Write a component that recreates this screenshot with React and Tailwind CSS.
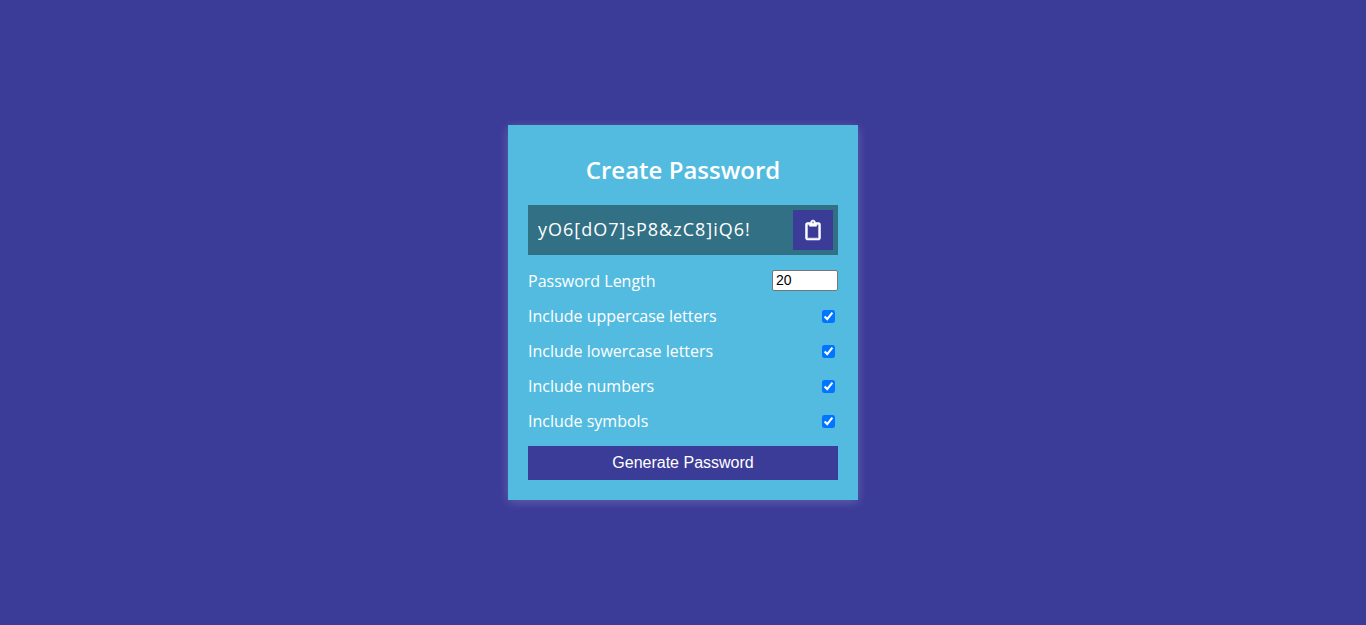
import { useState } from "react";
import { FaRegClipboard } from "react-icons/fa";

const OPTIONS = [
  { id: "uppercase", label: "Include uppercase letters", chars: "ABCDEFGHIJKLMNOPQRSTUVWXYZ" },
  { id: "lowercase", label: "Include lowercase letters", chars: "abcdefghijklmnopqrstuvwxyz" },
  { id: "numbers", label: "Include numbers", chars: "0123456789" },
  { id: "symbols", label: "Include symbols", chars: "!@#$%^&*(){}[]=<>/,." },
];

export default function App() {
  const [password, setPassword] = useState("yO6[dO7]sP8&zC8]iQ6!");
  const [length, setLength] = useState(20);
  const [enabled, setEnabled] = useState({
    uppercase: true,
    lowercase: true,
    numbers: true,
    symbols: true,
  });

  function generate() {
    const sets = OPTIONS.filter((option) => enabled[option.id]);
    let next = "";
    for (let i = 0; sets.length > 0 && i < Number(length); i += 1) {
      const { chars } = sets[i % sets.length];
      next += chars[Math.floor(Math.random() * chars.length)];
    }
    setPassword(next);
  }

  return (
    <main className="flex min-h-screen items-center justify-center bg-[#3b3b98] p-2.5 font-['Open_Sans',sans-serif] text-base text-white">
      <section className="w-full max-w-[350px] bg-[#54bbe0] p-5 shadow-[0_2px_10px_rgba(255,255,255,0.2)]">
        <h2 className="mt-2.5 mb-5 text-center text-2xl/[30px] font-semibold">Create Password</h2>

        <div className="flex h-[50px] items-center justify-between bg-black/40 pr-[5px] pl-2.5">
          <output className="min-w-0 overflow-hidden pb-0.5 text-lg tracking-[1px]">{password}</output>
          <button
            type="button"
            aria-label="Copy to clipboard"
            onClick={() => navigator.clipboard?.writeText(password)}
            className="flex size-10 shrink-0 cursor-pointer items-center justify-center bg-[#3b3b98] text-xl"
          >
            <FaRegClipboard className="overflow-visible stroke-current stroke-[14px]" />
          </button>
        </div>

        <div className="my-[15px] flex flex-col gap-[15px]">
          <div className="flex h-[21px] items-center justify-between">
            <label htmlFor="length">Password Length</label>
            <input
              id="length"
              type="number"
              min="4"
              max="20"
              value={length}
              onChange={(event) => setLength(event.target.value)}
              className="h-[21px] w-[66px] rounded-xs border border-[#767676] bg-white px-[3px] pb-0.5 font-['Liberation_Sans',sans-serif] text-sm/4 text-black"
            />
          </div>
          {OPTIONS.map(({ id, label }) => (
            <div key={id} className="flex h-5 items-center justify-between">
              <label htmlFor={id}>{label}</label>
              <input
                id={id}
                type="checkbox"
                checked={enabled[id]}
                onChange={(event) => setEnabled({ ...enabled, [id]: event.target.checked })}
                className="mr-[3px] size-[13px] accent-[#0075ff]"
              />
            </div>
          ))}
        </div>

        <button
          type="button"
          onClick={generate}
          className="h-[34px] w-full cursor-pointer bg-[#3b3b98] font-['Liberation_Sans',sans-serif]"
        >
          Generate Password
        </button>
      </section>
    </main>
  );
}
